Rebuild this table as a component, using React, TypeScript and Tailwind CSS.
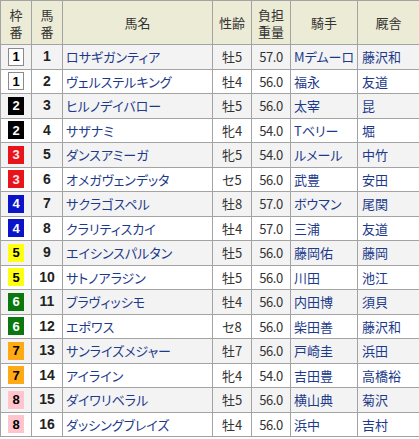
type Entry = {
  waku: number;
  uma: number;
  name: string;
  sex: string;
  weight: string;
  jockey: string;
  trainer: string;
};

const entries: Entry[] = [
  { waku: 1, uma: 1, name: "ロサギガンティア", sex: "牡5", weight: "57.0", jockey: "Mデムーロ", trainer: "藤沢和" },
  { waku: 1, uma: 2, name: "ヴェルステルキング", sex: "牡4", weight: "56.0", jockey: "福永", trainer: "友道" },
  { waku: 2, uma: 3, name: "ヒルノデイバロー", sex: "牡5", weight: "56.0", jockey: "太宰", trainer: "昆" },
  { waku: 2, uma: 4, name: "サザナミ", sex: "牝4", weight: "54.0", jockey: "Tベリー", trainer: "堀" },
  { waku: 3, uma: 5, name: "ダンスアミーガ", sex: "牝5", weight: "54.0", jockey: "ルメール", trainer: "中竹" },
  { waku: 3, uma: 6, name: "オメガヴェンデッタ", sex: "セ5", weight: "56.0", jockey: "武豊", trainer: "安田" },
  { waku: 4, uma: 7, name: "サクラゴスペル", sex: "牡8", weight: "57.0", jockey: "ボウマン", trainer: "尾関" },
  { waku: 4, uma: 8, name: "クラリティスカイ", sex: "牡4", weight: "57.0", jockey: "三浦", trainer: "友道" },
  { waku: 5, uma: 9, name: "エイシンスパルタン", sex: "牡5", weight: "56.0", jockey: "藤岡佑", trainer: "藤岡" },
  { waku: 5, uma: 10, name: "サトノアラジン", sex: "牡5", weight: "56.0", jockey: "川田", trainer: "池江" },
  { waku: 6, uma: 11, name: "ブラヴィッシモ", sex: "牡4", weight: "56.0", jockey: "内田博", trainer: "須貝" },
  { waku: 6, uma: 12, name: "エポワス", sex: "セ8", weight: "56.0", jockey: "柴田善", trainer: "藤沢和" },
  { waku: 7, uma: 13, name: "サンライズメジャー", sex: "牡7", weight: "56.0", jockey: "戸崎圭", trainer: "浜田" },
  { waku: 7, uma: 14, name: "アイライン", sex: "牝4", weight: "54.0", jockey: "吉田豊", trainer: "高橋裕" },
  { waku: 8, uma: 15, name: "ダイワリベラル", sex: "牡5", weight: "56.0", jockey: "横山典", trainer: "菊沢" },
  { waku: 8, uma: 16, name: "ダッシングブレイズ", sex: "牡4", weight: "56.0", jockey: "浜中", trainer: "吉村" },
];

// frame colours, 1..8
const wakuClass: Record<number, string> = {
  1: "bg-white text-black border border-[#8a8a8a]",
  2: "bg-black text-white",
  3: "bg-[#e8141c] text-[#ffe8e8]",
  4: "bg-[#0b14c8] text-white",
  5: "bg-[#ffff14] text-black",
  6: "bg-[#0a780f] text-white",
  7: "bg-[#ffa914] text-black",
  8: "bg-[#ffc4cc] text-black",
};

const cell = "border border-[#a3a3a3] p-0";

export default function App() {
  return (
    <div className="w-[419px] h-[439px] bg-white overflow-hidden font-['Noto_Sans_CJK_JP','Noto_Sans',sans-serif] [font-feature-settings:'palt'] text-[13px] text-[#333]">
      <table className="w-[419px] table-fixed border-collapse">
        <colgroup>
          <col className="w-[31px]" />
          <col className="w-[31px]" />
          <col className="w-[150px]" />
          <col className="w-[39px]" />
          <col className="w-[39px]" />
          <col className="w-[67px]" />
          <col className="w-[62px]" />
        </colgroup>
        <thead>
          <tr className="h-[44px] bg-[#ecebd6] leading-[17px]">
            <th className={`${cell} font-normal`}>枠<br />番</th>
            <th className={`${cell} font-normal`}>馬<br />番</th>
            <th className={`${cell} font-normal`}>馬名</th>
            <th className={`${cell} font-normal`}>性齢</th>
            <th className={`${cell} font-normal`}>負担<br />重量</th>
            <th className={`${cell} font-normal`}>騎手</th>
            <th className={`${cell} font-normal`}>厩舎</th>
          </tr>
        </thead>
        <tbody>
          {entries.map((e, i) => (
            <tr key={e.uma} className={`h-[24.5px] ${i % 2 === 0 ? "bg-[#f3f3f3]" : "bg-white"}`}>
              <td className={cell}>
                <div className="flex justify-center">
                  <span
                    className={`w-[16px] h-[18px] flex items-center justify-center font-['Liberation_Sans',sans-serif] font-bold text-[13px] leading-none ${wakuClass[e.waku]}`}
                  >
                    {e.waku}
                  </span>
                </div>
              </td>
              <td className={`${cell} text-center font-['Liberation_Sans',sans-serif] font-bold text-[14px] text-[#222]`}>{e.uma}</td>
              <td className={`${cell} pl-[3px] text-[#1d3a8a] whitespace-nowrap`}>{e.name}</td>
              <td className={`${cell} text-center`}>{e.sex}</td>
              <td className={`${cell} text-center tracking-[-0.5px]`}>{e.weight}</td>
              <td className={`${cell} pl-[3px] text-[#1d3a8a] whitespace-nowrap`}>{e.jockey}</td>
              <td className={`${cell} pl-[4px] text-[#1d3a8a] whitespace-nowrap`}>{e.trainer}</td>
            </tr>
          ))}
        </tbody>
      </table>
    </div>
  );
}
